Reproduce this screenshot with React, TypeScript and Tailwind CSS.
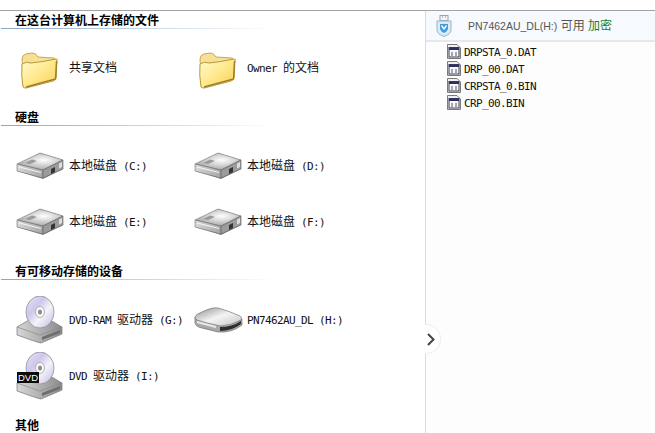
import React from "react";

const mono = "font-['DejaVu_Sans_Mono','Noto_Sans_CJK_SC',monospace]";

// latin glyphs are half the width of the cjk ones, like the old bitmap font
const Label: React.FC<{ text: string }> = ({ text }) => {
  return (
    <span className={"mb-[2px] whitespace-pre text-[#111] " + mono}>
      {text.split(/([\u4e00-\u9fff]+)/).map((part, index) =>
        /[\u4e00-\u9fff]/.test(part) ? (
          <span key={index} className="text-[12px] font-['Noto_Sans_CJK_SC',sans-serif]">
            {part}
          </span>
        ) : (
          <span key={index} className="text-[11px] tracking-[-0.62px]">
            {part}
          </span>
        )
      )}
    </span>
  );
};

const FolderIcon: React.FC = () => (
  <svg width="46" height="42" viewBox="0 0 46 42">
    <defs>
      <linearGradient id="folderFront" x1="0" y1="0" x2="1" y2="1">
        <stop offset="0" stopColor="#fffbd0" />
        <stop offset="0.5" stopColor="#ffe98c" />
        <stop offset="1" stopColor="#f8cf55" />
      </linearGradient>
    </defs>
    <path d="M6 12 Q6 8 10 7 L16 6 Q20 6 22 10 L38 11 Q40 12 40 14 L40 30 L8 40 Z" fill="#f6e096" stroke="#c9a94e" strokeWidth="1" />
    <path d="M7 40 Q5 28 6 17 Q10 14 15 16 Q26 15 40 12 Q42 12 41 14 L40 31 Q40 33 37 34 L10 41 Q8 41 7 40 Z" fill="url(#folderFront)" stroke="#b8973c" strokeWidth="1" />
    <path d="M40.5 14 L39.5 32 L10 40" fill="none" stroke="#a07e28" strokeWidth="1.4" />
  </svg>
);

const DriveBody: React.FC<{ id: string }> = ({ id }) => (
  <>
    <defs>
      <radialGradient id={id} cx="0.58" cy="0.42" r="0.6">
        <stop offset="0" stopColor="#ffffff" />
        <stop offset="1" stopColor="#a8a8a8" />
      </radialGradient>
      <linearGradient id={id + "Side"} x1="0" y1="0" x2="1" y2="0">
        <stop offset="0" stopColor="#d8d8d8" />
        <stop offset="1" stopColor="#a6a6a6" />
      </linearGradient>
    </defs>
    <path d="M1 13 L24 1 L47 8 L47 17 L27 27 L1 19 Z" fill="#8c8c8c" />
    <path d="M1 12 L24 1 L47 8 L27 18 Z" fill={"url(#" + id + ")"} stroke="#858585" strokeWidth="0.7" />
    <path d="M1 12 L27 18 L27 26 L1 19 Z" fill={"url(#" + id + "Side)"} stroke="#6f6f6f" strokeWidth="0.6" />
    <path d="M3 15 L25 20.5" stroke="#f4f4f4" strokeWidth="1.2" />
    <path d="M27 18 L47 8 L47 17 L27 26 Z" fill="#9b9b9b" stroke="#5e5e5e" strokeWidth="0.6" />
  </>
);

const DiskIcon: React.FC = () => (
  <svg width="48" height="28" viewBox="0 0 48 28">
    <DriveBody id="diskTop" />
    <path d="M9 11 L16 7.5 L21 9 L14 12 Z" fill="#9a9a9a" />
    <path d="M35 17 L39 15 L39 20 L35 22 Z" fill="#333" />
    <path d="M43 11.5 L46 10 L46 15 L43 16.5 Z" fill="#dedede" />
  </svg>
);

const RemovableIcon: React.FC = () => (
  <svg width="50" height="28" viewBox="0 0 50 28">
    <defs>
      <linearGradient id="remTop" x1="0" y1="0" x2="1" y2="1">
        <stop offset="0" stopColor="#8f8f8f" />
        <stop offset="0.5" stopColor="#f4f4f4" />
        <stop offset="1" stopColor="#c5c5c5" />
      </linearGradient>
    </defs>
    <path d="M1 11 L1 17 Q2 21 8 22 L24 26 Q38 27 48 19 L48 13 Z" fill="#a9a9a9" stroke="#6f6f6f" strokeWidth="0.7" />
    <path d="M1 11 Q2 8 8 6 Q18 1 24 2 Q32 4 46 10 Q49 12 47 14 Q36 20 26 20 Q12 17 3 14 Q1 13 1 11 Z" fill="url(#remTop)" stroke="#777" strokeWidth="0.7" />
    <path d="M3 16 L22 21" stroke="#e8e8e8" strokeWidth="2" />
    <path d="M26 21 Q38 21 47 15 L47 18 Q38 25 26 25 Z" fill="#2e2e2e" />
  </svg>
);

const DvdIcon: React.FC<{ id: string; badge?: boolean }> = ({ id, badge }) => (
  <svg width="48" height="48" viewBox="0 0 48 48">
    <defs>
      <linearGradient id={id + "Disc"} x1="0" y1="0" x2="1" y2="1">
        <stop offset="0" stopColor="#e8e8f4" />
        <stop offset="0.35" stopColor="#cfc6ea" />
        <stop offset="0.6" stopColor="#f4f4fa" />
        <stop offset="1" stopColor="#bdb8de" />
      </linearGradient>
      <linearGradient id={id + "Drive"} x1="0" y1="0" x2="1" y2="0">
        <stop offset="0" stopColor="#d6d6d6" />
        <stop offset="1" stopColor="#8c8c8c" />
      </linearGradient>
    </defs>
    <path d="M1 31 L13 24 L34 24 L46 31 L46 38 L25 47 Q23 47 1 39 Z" fill={"url(#" + id + "Drive)"} stroke="#777" strokeWidth="0.7" />
    <path d="M1 31 L24 39 L46 31" fill="none" stroke="#888" strokeWidth="0.7" />
    <path d="M26 41 L44 34 L44 37 L26 44 Z" fill="#6e6e6e" />
    <ellipse cx="24" cy="16" rx="14" ry="16" fill={"url(#" + id + "Disc)"} stroke="#8f8f9f" strokeWidth="0.8" />
    <ellipse cx="24" cy="16" rx="4.5" ry="5.5" fill="#f8f8f8" stroke="#9a9aa8" strokeWidth="0.7" />
    <ellipse cx="24" cy="16" rx="2" ry="2.5" fill="#8a8a8a" />
    {badge && (
      <>
        <rect x="1" y="20" width="22" height="11" fill="#0c0c0c" />
        <text x="12" y="29" textAnchor="middle" fontSize="9.5" fontFamily="Liberation Sans" fill="#fff">
          DVD
        </text>
      </>
    )}
  </svg>
);

const FileIcon: React.FC = () => (
  <svg width="14" height="15" viewBox="0 0 14 15">
    <path d="M0.5 0.5 H10 L13.5 4 V14.5 H0.5 Z" fill="#f0f0f0" stroke="#7a7a7a" />
    <rect x="2" y="3.5" width="10" height="9.5" fill="#f8f8f8" stroke="#3a3f5e" />
    <rect x="2" y="3.5" width="10" height="2.5" fill="#2a3060" />
    <path d="M4 9 h2 M8 9 h2 M4 11 h2 M8 11 h2" stroke="#555" strokeWidth="1" />
  </svg>
);

const ShieldIcon: React.FC = () => (
  <svg width="16" height="22" viewBox="0 0 16 22">
    <rect x="4" y="0.5" width="8" height="5" fill="#f2f4f6" stroke="#9aa3ad" />
    <path d="M6 2 h1 M9 2 h1" stroke="#7d8791" />
    <path d="M1 6 H15 V15 Q15 19 8 21.5 Q1 19 1 15 Z" fill="#dcebf8" stroke="#9fb4c6" />
    <path d="M4 9 H12 V13 Q12 16 8 18 Q4 16 4 13 Z" fill="#3b9be0" />
    <path d="M5.5 10.5 L8 14 L10.5 10.5" fill="none" stroke="#fff" strokeWidth="1.4" />
  </svg>
);

const Header: React.FC<{ title: string; className?: string }> = ({ title, className = "" }) => (
  <div className={"flex flex-col " + className}>
    <div className="h-[17px] pl-[14px] text-[12px] leading-[17px] font-bold text-black font-['Noto_Sans_CJK_SC',sans-serif]">
      {title}
    </div>
    <div className="h-px w-[275px] bg-linear-to-r from-[#86a8c8] via-[#c4d4e2] to-white" />
  </div>
);

const Item: React.FC<{ icon: React.ReactNode; text: string }> = ({ icon, text }) => (
  <div className="flex h-[56px] w-[178px] items-center">
    <div className="flex w-[53px] shrink-0 items-center">{icon}</div>
    <Label text={text} />
  </div>
);

const files = ["DRPSTA_0.DAT", "DRP_00.DAT", "CRPSTA_0.BIN", "CRP_00.BIN"];

const App: React.FC = () => {
  return (
    <div className="relative flex h-[433px] w-[655px] flex-col overflow-hidden bg-white">
      <div className="h-[11px] shrink-0 border-b border-[#a3a3a3]" />
      <div className="flex min-h-0 flex-1">
        {/* left pane */}
        <div className="w-[425px] shrink-0 overflow-hidden pl-[1px]">
          <Header title="在这台计算机上存储的文件" />
          <div className="mt-[11px] flex pl-[15px]">
            <Item icon={<FolderIcon />} text="共享文档" />
            <Item icon={<FolderIcon />} text="Owner 的文档" />
          </div>
          <Header title="硬盘" className="mt-[12px]" />
          <div className="mt-[12px] grid grid-cols-[178px_178px] pl-[15px]">
            <Item icon={<DiskIcon />} text="本地磁盘 (C:)" />
            <Item icon={<DiskIcon />} text="本地磁盘 (D:)" />
            <Item icon={<DiskIcon />} text="本地磁盘 (E:)" />
            <Item icon={<DiskIcon />} text="本地磁盘 (F:)" />
          </div>
          <Header title="有可移动存储的设备" className="mt-[12px]" />
          <div className="mt-[12px] grid grid-cols-[178px_178px] pl-[15px]">
            <Item icon={<DvdIcon id="dvdRam" />} text="DVD-RAM 驱动器 (G:)" />
            <Item icon={<RemovableIcon />} text="PN7462AU_DL (H:)" />
            <Item icon={<DvdIcon id="dvdRom" badge />} text="DVD 驱动器 (I:)" />
          </div>
          <Header title="其他" className="mt-[12px]" />
        </div>

        {/* right pane */}
        <div className="flex-1 border-l border-[#dcdcdc] bg-[#fdfdfd]">
          <div className="flex h-[31px] items-center border-b-2 border-[#e6e8ea] bg-[#f6f9fd] pl-[10px]">
            <ShieldIcon />
            <span className="ml-[16px] whitespace-pre text-[12px] text-[#555] font-['Liberation_Sans','Noto_Sans_CJK_SC',sans-serif]">
              <span className="text-[10.5px]">PN7462AU_DL(H:)</span> 可用 <span className="text-[#1c7d1c]">加密</span>
            </span>
          </div>
          <div className="flex flex-col pt-[1px] pl-[21px]">
            {files.map((file) => (
              <div key={file} className="flex h-[17px] items-center gap-[3px]">
                <FileIcon />
                <Label text={file} />
              </div>
            ))}
          </div>
        </div>
      </div>

      {/* collapse handle over the divider */}
      <div className="absolute top-[324px] left-[425px] flex h-[30px] w-[16px] items-center rounded-r-[15px] border border-l-0 border-[#ececec] bg-white pl-[2px]">
        <svg width="8" height="13" viewBox="0 0 8 13">
          <path d="M1 1 L6.5 6.5 L1 12" fill="none" stroke="#444" strokeWidth="2" />
        </svg>
      </div>
    </div>
  );
};

export default App;
